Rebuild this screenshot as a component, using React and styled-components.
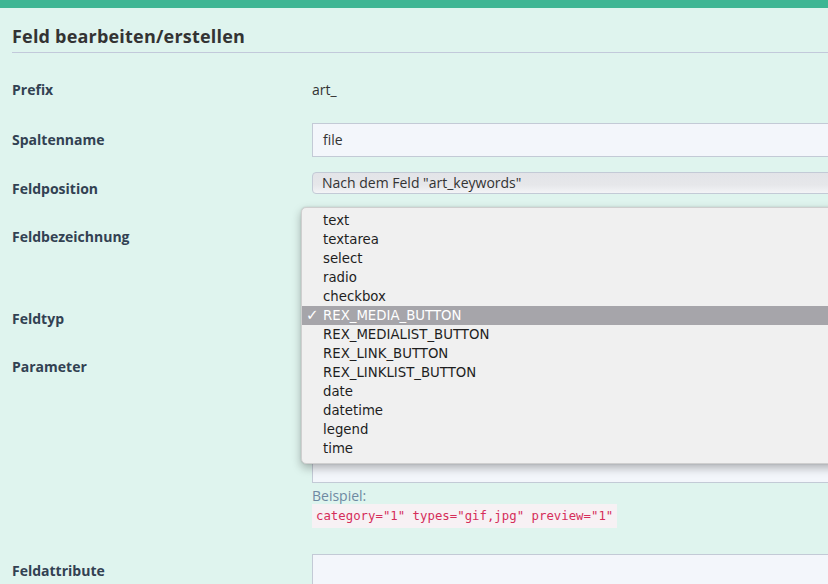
import React from "react";
import styled, { createGlobalStyle } from "styled-components";

const Global = createGlobalStyle`
  html, body { margin: 0; padding: 0; }
  body {
    background: #dff4ee;
    font-family: "Open Sans", "Noto Sans", sans-serif;
    overflow: hidden;
    width: 828px;
    height: 584px;
  }
`;

const TopBar = styled.div`
  height: 8px;
  background: #3fb694;
`;

const Panel = styled.section`
  padding: 0 0 0 12px;
  width: 1000px;
`;

const Heading = styled.h2`
  margin: 0;
  padding: 15px 0 2px 0;
  font-size: 18px;
  line-height: 27px;
  font-weight: 700;
  color: #333;
  letter-spacing: 0.2px;
  border-bottom: 1px solid #c2c9da;
`;

const Form = styled.div`
  padding-top: 20px;
  display: flex;
  flex-direction: column;
`;

const Row = styled.div`
  display: grid;
  grid-template-columns: 300px 600px;
  min-height: ${(p) => p.$h || 33}px;
  margin-bottom: 15px;
`;

const Label = styled.label`
  padding-top: 7px;
  font-size: 14px;
  line-height: 20px;
  font-weight: 700;
  color: #324152;
`;

const Field = styled.div`
  position: relative;
  display: flex;
  flex-direction: column;
  align-items: flex-start;
`;

const Static = styled.div`
  padding-top: 7px;
  font-size: 14px;
  line-height: 20px;
  color: #333;
`;

const Input = styled.div`
  box-sizing: border-box;
  width: 100%;
  height: ${(p) => p.$h || 34}px;
  background: #f3f6fb;
  border: 1px solid #c3cad6;
  padding: 6px 10px;
  font-size: 14px;
  line-height: 20px;
  color: #333;
`;

const Select = styled.div`
  box-sizing: border-box;
  width: 100%;
  height: 22px;
  border: 1px solid #c3cad6;
  border-radius: 4px 0 0 4px;
  background: linear-gradient(#e3e4e8, #e6e7ea 60%, #f3f4f6);
  padding: 0 9px;
  font-size: 14px;
  line-height: 20px;
  color: #333;
`;

const Help = styled.div`
  margin-top: 5px;
  font-size: 14px;
  line-height: 16px;
  color: #6e89a2;
`;

const Code = styled.code`
  padding: 3px 4px;
  background: #f7f1f4;
  color: #d52d5a;
  font-family: "DejaVu Sans Mono", "Liberation Mono", monospace;
  font-size: 12.35px;
  line-height: 18px;
`;

const Menu = styled.ul`
  position: absolute;
  left: -11px;
  top: -95px;
  width: 600px;
  margin: 0;
  padding: 3px 0 5px;
  list-style: none;
  background: #f0f0f0;
  border: 1px solid #cfcfcf;
  border-radius: 5px;
  box-shadow: 0 4px 10px rgba(0, 0, 0, 0.28), 0 0 2px rgba(0, 0, 0, 0.15);
  z-index: 5;
  font-family: "DejaVu Sans", "Lucida Grande", sans-serif;
`;

const Item = styled.li`
  position: relative;
  height: 19px;
  line-height: 19px;
  padding-left: 21px;
  font-size: 13.3px;
  color: ${(p) => (p.$active ? "#fff" : "#1e1e1e")};
  background: ${(p) => (p.$active ? "#a6a5aa" : "transparent")};
`;

const Check = styled.span`
  position: absolute;
  left: 4px;
  top: 0;
  font-size: 15px;
  font-weight: 700;
`;

const options = [
  "text",
  "textarea",
  "select",
  "radio",
  "checkbox",
  "REX_MEDIA_BUTTON",
  "REX_MEDIALIST_BUTTON",
  "REX_LINK_BUTTON",
  "REX_LINKLIST_BUTTON",
  "date",
  "datetime",
  "legend",
  "time",
];

export default function App() {
  return (
    <>
      <Global />
      <TopBar />
      <Panel>
        <Heading>Feld bearbeiten/erstellen</Heading>
        <Form>
          <Row $h={35}>
            <Label>Prefix</Label>
            <Field>
              <Static>art_</Static>
            </Field>
          </Row>
          <Row>
            <Label>Spaltenname</Label>
            <Field>
              <Input>file</Input>
            </Field>
          </Row>
          <Row>
            <Label>Feldposition</Label>
            <Field>
              <Select>Nach dem Feld "art_keywords"</Select>
            </Field>
          </Row>
          <Row $h={67}>
            <Label>Feldbezeichnung</Label>
            <Field>
              <Input />
            </Field>
          </Row>
          <Row $h={33}>
            <Label>Feldtyp</Label>
            <Field>
              <Select>REX_MEDIA_BUTTON</Select>
              <Menu>
                {options.map((o) => (
                  <Item key={o} $active={o === "REX_MEDIA_BUTTON"}>
                    {o === "REX_MEDIA_BUTTON" && <Check>✓</Check>}
                    {o}
                  </Item>
                ))}
              </Menu>
            </Field>
          </Row>
          <Row $h={189}>
            <Label>Parameter</Label>
            <Field>
              <Input $h={133} />
              <Help>Beispiel:</Help>
              <Code>category="1" types="gif,jpg" preview="1"</Code>
            </Field>
          </Row>
          <Row>
            <Label>Feldattribute</Label>
            <Field>
              <Input $h={80} />
            </Field>
          </Row>
        </Form>
      </Panel>
    </>
  );
}
